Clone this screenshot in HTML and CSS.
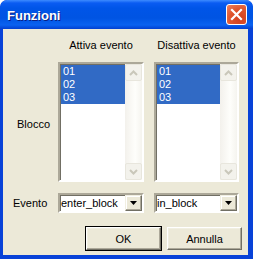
FILE: index.html
```html
<!DOCTYPE html>
<html lang="it">
<head>
    <meta charset="UTF-8">
    <title>Funzioni</title>
    <link rel="stylesheet" href="styles.css">
</head>
<body>
    <div class="window">
        <div class="titlebar">
            <span class="title">Funzioni</span>
            <span class="close">
                <svg width="21" height="21" viewBox="0 0 21 21">
                    <path d="M6 6 L15 15 M15 6 L6 15" stroke="#fff" stroke-width="2.2" stroke-linecap="square"/>
                </svg>
            </span>
        </div>
        <div class="content">
            <div class="form-grid">
                <div></div>
                <div class="col-head">Attiva evento</div>
                <div class="col-head">Disattiva evento</div>

                <div class="row-label blocco">Blocco</div>
                <div class="listbox">
                    <div class="items">
                        <div class="item selected">01</div>
                        <div class="item selected">02</div>
                        <div class="item selected">03</div>
                    </div>
                    <div class="scrollbar">
                        <div class="sb-btn"><svg width="9" height="6" viewBox="0 0 9 6"><path d="M1 5 L4.5 1.5 L8 5" fill="none" stroke="#c9c7ba" stroke-width="2"/></svg></div>
                        <div class="sb-track"></div>
                        <div class="sb-btn"><svg width="9" height="6" viewBox="0 0 9 6"><path d="M1 1 L4.5 4.5 L8 1" fill="none" stroke="#c9c7ba" stroke-width="2"/></svg></div>
                    </div>
                </div>
                <div class="listbox">
                    <div class="items">
                        <div class="item selected">01</div>
                        <div class="item selected">02</div>
                        <div class="item selected">03</div>
                    </div>
                    <div class="scrollbar">
                        <div class="sb-btn"><svg width="9" height="6" viewBox="0 0 9 6"><path d="M1 5 L4.5 1.5 L8 5" fill="none" stroke="#c9c7ba" stroke-width="2"/></svg></div>
                        <div class="sb-track"></div>
                        <div class="sb-btn"><svg width="9" height="6" viewBox="0 0 9 6"><path d="M1 1 L4.5 4.5 L8 1" fill="none" stroke="#c9c7ba" stroke-width="2"/></svg></div>
                    </div>
                </div>

                <div class="row-label evento">Evento</div>
                <div class="combo">
                    <span class="combo-text">enter_block</span>
                    <span class="combo-btn"><svg width="7" height="4" viewBox="0 0 7 4"><path d="M0 0 H7 L3.5 4 Z" fill="#000"/></svg></span>
                </div>
                <div class="combo">
                    <span class="combo-text">in_block</span>
                    <span class="combo-btn"><svg width="7" height="4" viewBox="0 0 7 4"><path d="M0 0 H7 L3.5 4 Z" fill="#000"/></svg></span>
                </div>
            </div>

            <div class="buttons">
                <button class="btn default">OK</button>
                <button class="btn">Annulla</button>
            </div>
        </div>
    </div>
</body>
</html>
```

FILE: styles.css
```css
/* Page */
html, body {
    margin: 0;
    padding: 0;
    background: #ffffff;
}

/* Window frame */
.window {
    width: 253px;
    height: 259px;
    box-sizing: border-box;
    background: #0842d8;
    border-radius: 7px 7px 0 0;
    padding: 0 5px 4px 3px;
    display: flex;
    flex-direction: column;
    font-family: "Liberation Sans", Arial, sans-serif;
    font-size: 11px;
    color: #000;
    overflow: hidden;
}

/* Title bar */
.titlebar {
    height: 29px;
    margin: 0 -5px 0 -3px;
    padding: 0 6px 0 7px;
    display: flex;
    align-items: center;
    justify-content: space-between;
    border-radius: 7px 7px 0 0;
    background: linear-gradient(to bottom, #3d8bff 0, #0a5cf2 3px, #0055e8 8px, #0054e3 18px, #0a62f0 25px, #0550e0 27px, #0440d0 29px);
}

.title {
    color: #fff;
    font-weight: bold;
    font-size: 13px;
    text-shadow: 1px 1px 0 #0a1e80;
    margin-top: 1px;
}

.close {
    width: 21px;
    height: 21px;
    box-sizing: border-box;
    border: 1px solid #fff;
    border-radius: 3px;
    background: radial-gradient(circle at 70% 75%, #d2401f 0, #e0562e 55%, #f08462 100%);
    display: flex;
    align-items: center;
    justify-content: center;
}

.close svg {
    display: block;
    margin: -1px;
}

/* Dialog body */
.content {
    flex: 1;
    background: #ece9d8;
    display: flex;
    flex-direction: column;
}

.form-grid {
    display: grid;
    grid-template-columns: 45px 86px 85px;
    grid-template-rows: 22px 120px 20px;
    column-gap: 10px;
    row-gap: 11px;
}

.col-head {
    display: flex;
    justify-content: center;
    align-items: flex-start;
    padding-top: 10px;
    line-height: 13px;
    white-space: nowrap;
}

.row-label {
    display: flex;
    align-items: center;
    white-space: nowrap;
}

.row-label.blocco {
    padding-left: 14px;
    padding-top: 4px;
}

.row-label.evento {
    padding-left: 10px;
}

/* List boxes */
.listbox {
    box-sizing: border-box;
    background: #fff;
    border-style: solid;
    border-width: 2px;
    border-color: #aca899 #fff #fff #aca899;
    box-shadow: inset 1px 1px 0 #716f64;
    display: flex;
}

.items {
    flex: 1;
    padding-top: 1px;
    padding-left: 1px;
}

.item {
    height: 13px;
    line-height: 13px;
    padding-left: 2px;
}

.item.selected {
    background: #316ac5;
    color: #fff;
}

.scrollbar {
    width: 17px;
    display: flex;
    flex-direction: column;
    background: linear-gradient(to right, #f3f1ec, #fefefb 60%, #f5f4ef);
}

.sb-btn {
    height: 17px;
    box-sizing: border-box;
    border: 1px solid #e8e6dd;
    border-radius: 2px;
    background: #f3f2ec;
    display: flex;
    align-items: center;
    justify-content: center;
}

.sb-track {
    flex: 1;
}

/* Combo boxes */
.combo {
    box-sizing: border-box;
    background: #fff;
    border-style: solid;
    border-width: 2px;
    border-color: #aca899 #fff #fff #aca899;
    box-shadow: inset 1px 1px 0 #716f64;
    display: flex;
    align-items: center;
    padding-left: 1px;
}

.combo-text {
    flex: 1;
    font-size: 11px;
}

.combo-btn {
    width: 17px;
    height: 16px;
    box-sizing: border-box;
    background: #ece9d8;
    border-style: solid;
    border-width: 1px;
    border-color: #f1efe2 #716f64 #716f64 #f1efe2;
    box-shadow: inset -1px -1px 0 #aca899, inset 1px 1px 0 #fff;
    display: flex;
    align-items: center;
    justify-content: center;
}

/* Buttons */
.buttons {
    display: flex;
    justify-content: flex-end;
    gap: 6px;
    padding: 14px 6px 0 0;
}

.btn {
    width: 75px;
    height: 23px;
    box-sizing: border-box;
    background: #ece9d8;
    font-family: "Liberation Sans", Arial, sans-serif;
    font-size: 11px;
    color: #000;
    border-style: solid;
    border-width: 1px;
    border-color: #fff #716f64 #716f64 #fff;
    box-shadow: inset -1px -1px 0 #aca899, inset 1px 1px 0 #f1efe2;
    padding: 0;
}

.btn.default {
    outline: 1px solid #000;
    outline-offset: 0;
}
```
